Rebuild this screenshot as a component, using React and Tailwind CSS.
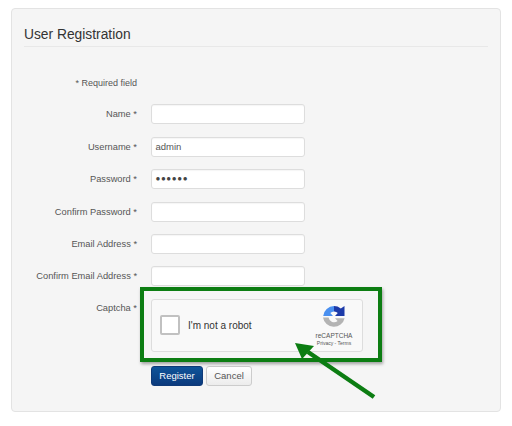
const FONT = "font-['Liberation_Sans',Arial,sans-serif]";

function Row({ label, value, password }) {
  return (
    <div className="flex items-center h-5 mb-[12.4px]">
      <div className="w-[113px] text-right text-[9.3px] leading-5 text-[#555]">{label}</div>
      <div className="ml-[14px] w-[154px] h-5 bg-white border border-[#ddd] rounded-[3px] px-[3.5px] flex items-center text-[9.5px] text-[#555] shadow-[inset_0_1px_1px_rgba(0,0,0,0.04)]">
        {password ? <span className="text-[8px] tracking-[0.6px] text-[#444]">●●●●●●</span> : value}
      </div>
    </div>
  );
}

function RecaptchaLogo() {
  return (
    <svg width="24" height="24" viewBox="0 0 24 24">
      <path d="M12 1a11 11 0 0 1 6.8 2.4L22.5 1v10H13l2.8-3A5 5 0 0 0 12 6.5z" fill="#1c3aa9" />
      <path d="M1.2 11A11 11 0 0 1 12 1v5.5A5.5 5.5 0 0 0 8.3 8l2.7 3z" fill="#4a90f0" />
      <path d="M1 12.5h5.6A5.5 5.5 0 0 0 15.6 16l-2.6-2.8h9.6A11 11 0 0 1 1 12.5z" fill="#b4b4b4" />
    </svg>
  );
}

export default function App() {
  return (
    <div className={`relative w-[512px] h-[426px] overflow-hidden bg-white pt-2 pl-[11px] ${FONT}`}>
      <div className="w-[490px] h-[404px] bg-[#f5f5f5] border border-[#e3e3e3] rounded-[4px] pl-3 pr-3 pt-[15px]">
        <h1 className="text-[13.8px] leading-[21px] font-normal text-[#333] border-b border-[#e8e8e8] h-[23px]">User Registration</h1>

        <div className="flex h-5 mt-[27px] mb-[10.4px] items-center">
          <div className="w-[113px] text-right text-[9px] text-[#555]">* Required field</div>
        </div>

        <Row label="Name *" />
        <Row label="Username *" value="admin" />
        <Row label="Password *" password />
        <Row label="Confirm Password *" />
        <Row label="Email Address *" />
        <Row label="Confirm Email Address *" />

        <div className="flex items-start h-[53px] mt-[1px]">
          <div className="w-[113px] text-right text-[9.3px] leading-5 text-[#555] mt-[-1px]">Captcha *</div>
          <div className="ml-[14px] w-[212px] h-[53px] bg-[#f9f9f9] border border-[#ddd] rounded-[3px] flex items-center justify-between pl-2 pr-[8px]">
            <div className="flex items-center">
              <div className="w-5 h-5 bg-white border-2 border-[#c1c1c1] rounded-[2px]" />
              <span className="ml-2 text-[10px] text-[#333]">I'm not a robot</span>
            </div>
            <div className="flex flex-col items-center w-10 mt-[2px]">
              <RecaptchaLogo />
              <div className="text-[6.5px] leading-[9px] text-[#555] mt-[2px]">reCAPTCHA</div>
              <div className="text-[5px] leading-[7px] text-[#555]">Privacy - Terms</div>
            </div>
          </div>
        </div>

        <div className="flex ml-[127px] mt-[14px] gap-[3px]">
          <button className="w-[52px] h-5 rounded-[3px] border border-[#0f3a78] bg-gradient-to-b from-[#0f5499] to-[#0b3a7d] text-white text-[9.5px]">Register</button>
          <button className="w-[46px] h-5 rounded-[3px] border border-[#ccc] bg-gradient-to-b from-white to-[#ececec] text-[#555] text-[9.5px]">Cancel</button>
        </div>
      </div>

      <div className="absolute left-[140px] top-[287px] w-[242px] h-[75px] border-[4px] border-[#0c7d12] shadow-[1px_2px_3px_rgba(0,0,0,0.35)]" />
      <svg className="absolute left-[290px] top-[335px]" width="90" height="70" viewBox="0 0 90 70">
        <path d="M84 62 L18 17" stroke="#0c7d12" strokeWidth="4.5" fill="none" />
        <path d="M5 8 L24 11 L12 24 Z" fill="#0c7d12" />
      </svg>
    </div>
  );
}
